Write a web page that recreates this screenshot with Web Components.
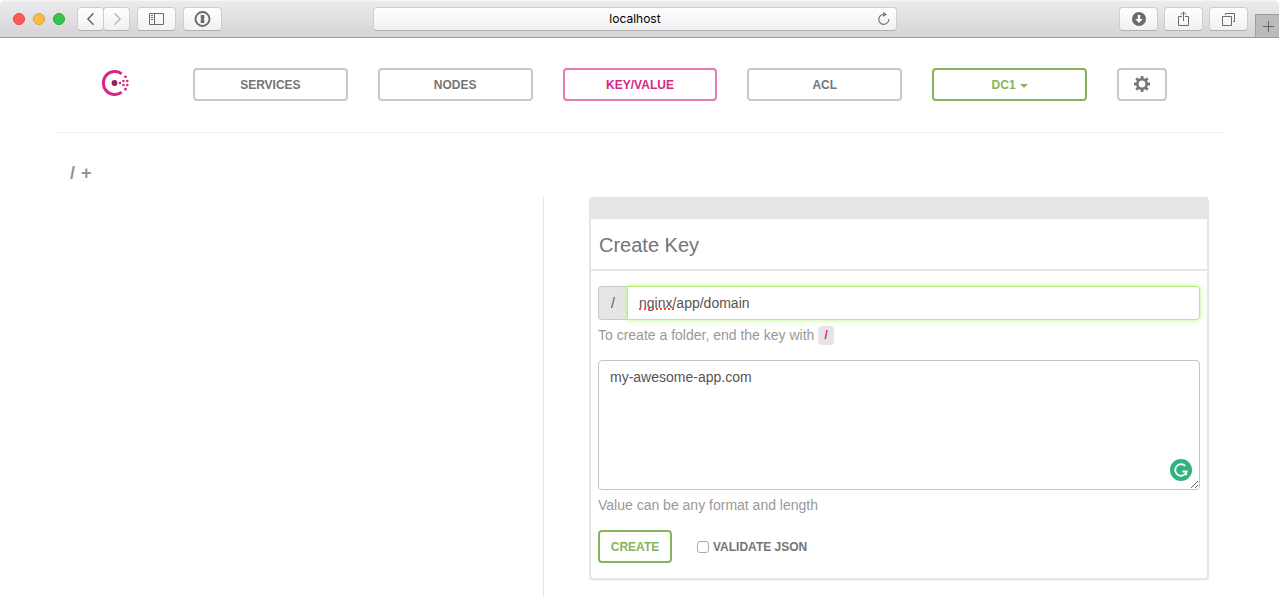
<!DOCTYPE html>
<html lang="en">
<head>
<meta charset="utf-8">
<title>Consul</title>
<style>
  body { margin: 0; background: #fff; color: #757575; font: 14px/20px "Liberation Sans", Arial, sans-serif; }
</style>
</head>
<body>
<consul-app></consul-app>

<template id="tpl-app">
  <style>
    :host { display: flex; flex-direction: column; min-height: 100vh; }
    main { flex: 1; display: flex; flex-direction: column; padding: 0 55px; }
    .cols { flex: 1; display: grid; grid-template-columns: minmax(0, 489fr) minmax(0, 680fr); }
    .list { box-sizing: border-box; border-right: 1px solid #e5e5e5; }
    .detail { padding: 0 15px 16px 45px; }
  </style>
  <browser-toolbar></browser-toolbar>
  <main>
    <consul-nav></consul-nav>
    <key-path></key-path>
    <div class="cols">
      <div class="list"></div>
      <div class="detail">
        <ui-panel>
          <span slot="title">Create Key</span>
          <key-form></key-form>
        </ui-panel>
      </div>
    </div>
  </main>
</template>

<template id="tpl-tool-button">
  <style>
    :host { display: block; width: 39px; }
    :host([small]) { width: 27px; }
    button { box-sizing: border-box; display: flex; align-items: center; justify-content: center; width: 100%; height: 24px; padding: 0; border: 1px solid #cfcdcf; border-bottom-color: #b0aeb0; border-radius: 4px; background: linear-gradient(#fefefe, #f1f1f1); color: #6b6b6b; }
  </style>
  <button type="button"><slot></slot></button>
</template>

<template id="tpl-toolbar">
  <style>
    :host { box-sizing: border-box; position: relative; display: grid; grid-template-columns: 1fr minmax(0, 524px) 1fr; height: 38px; padding: 6px 9px 6px 0; background: linear-gradient(#edebee, #d5d3d5); border-top: 1px solid #f6f4f7; border-bottom: 1px solid #9d9b9d; border-radius: 5px 5px 0 0; column-gap: 16px; }
    .left { display: flex; align-items: center; gap: 7px; padding-left: 13px; }
    .lights { display: flex; gap: 8px; margin-right: 5px; }
    .lights i { box-sizing: border-box; width: 12px; height: 12px; border-radius: 50%; border: 1px solid; }
    .lights i:nth-child(1) { background: #fc5b57; border-color: #e2463f; }
    .lights i:nth-child(2) { background: #fdbc40; border-color: #dfa033; }
    .lights i:nth-child(3) { background: #34c84a; border-color: #27aa35; }
    .pair { display: grid; grid-template-columns: 26px 27px; }
    .left, .right { min-width: 0; }
    .address { box-sizing: border-box; display: flex; align-items: center; height: 24px; padding: 0 5px 0 19px; border: 1px solid #cfcdcf; border-bottom-color: #b0aeb0; border-radius: 4px; background: linear-gradient(#fefefe, #f1f1f1); }
    input { flex: 1; min-width: 0; border: 0; padding: 0; background: none; outline: 0; color: #000; text-align: center; font: 12px/16px Inter, "Liberation Sans", sans-serif; }
    .reload { width: 14px; height: 16px; padding: 0; border: 0; background: none; }
    .reload svg { display: block; }
    .right { display: flex; justify-content: flex-end; gap: 6px; padding-right: 22px; }
    .tab { position: absolute; right: 0; bottom: 0; box-sizing: border-box; width: 24px; height: 23px; padding: 0; border: solid #9d9b9d; border-width: 1px 0 0 1px; background: #bcbabd; }
    .tab svg { display: block; margin: 0 auto; }
  </style>
  <div class="left">
    <div class="lights"><i></i><i></i><i></i></div>
    <div class="pair">
      <tool-button small label="Back"><svg width="12" height="14" viewBox="0 0 12 14" fill="none" stroke="#6b6b6b" stroke-width="1.6"><path d="M8.500 1.200 3 7l5.500 5.800"/></svg></tool-button>
      <tool-button small label="Forward"><svg width="12" height="14" viewBox="0 0 12 14" fill="none" stroke="#bcbcbc" stroke-width="1.6"><path d="M3.500 1.200 9 7l-5.500 5.800"/></svg></tool-button>
    </div>
    <tool-button label="Sidebar"><svg width="15" height="12" viewBox="0 0 15 12" fill="none" stroke="#6b6b6b"><path d="M.5.5h14v11H.5zM5.500.500v11M2 2.500h2M2 4.500h2M2 6.500h2"/></svg></tool-button>
    <tool-button label="Passwords"><svg width="17" height="16" viewBox="0 0 17 16"><circle cx="8.500" cy="8" r="7" fill="none" stroke="#6b6b6b" stroke-width="1.900"/><path d="M6.700 4h3.600v3.200l-.8.8.8.8V12H6.700V8.800l.8-.8-.8-.8z" fill="#6b6b6b"/></svg></tool-button>
  </div>
  <div class="address">
    <input aria-label="Address" value="localhost">
    <button class="reload" type="button" aria-label="Reload"><svg width="14" height="16" viewBox="0 0 14 16"><path d="M11.800 8A5 5 0 1 1 7 3.400" fill="none" stroke="#7c7c7c" stroke-width="1.200"/><path d="M6 .8 10 3.500 6 6z" fill="#7c7c7c"/></svg></button>
  </div>
  <div class="right">
    <tool-button label="Downloads"><svg width="14" height="14" viewBox="0 0 14 14"><circle cx="7" cy="7" r="7" fill="#6b6b6b"/><path d="M5.800 3h2.400v4h2.600L7 11 3.200 7h2.600z" fill="#fff"/></svg></tool-button>
    <tool-button label="Share"><svg width="11" height="16" viewBox="0 0 11 16" fill="none" stroke="#6b6b6b"><path d="M4 5.500H.5v9h10v-9H7M5.500 10V1M2.700 3.800 5.500 1l2.800 2.800"/></svg></tool-button>
    <tool-button label="Tabs"><svg width="13" height="13" viewBox="0 0 13 13" fill="none" stroke="#6b6b6b"><path d="M.5 3.500h9v9h-9zM3.500 2V.5h9v8H11"/></svg></tool-button>
  </div>
  <button class="tab" type="button" aria-label="New tab"><svg width="12" height="12" viewBox="0 0 12 12" stroke="#666"><path d="M6.500 1v11M1 6.500h11"/></svg></button>
</template>

<template id="tpl-nav-item">
  <style>
    :host { display: block; min-width: 0; --edge: #c9c9c9; --ink: #757575; }
    :host([active]) { --edge: #e57bb1; --ink: #d62783; }
    :host([tone="green"]) { --edge: #84b45b; --ink: #84b45b; }
    a, button { box-sizing: border-box; display: flex; align-items: center; justify-content: center; gap: 4px; width: 100%; height: 33px; padding: 0; border: 2px solid var(--edge); border-radius: 4px; background: #fff; color: var(--ink); font: bold 12px/20px "Liberation Sans", Arial, sans-serif; text-decoration: none; }
  </style>
</template>

<template id="tpl-nav">
  <style>
    :host { display: grid; grid-template-columns: 62px repeat(5, minmax(0, 1fr)) 50px; column-gap: 30px; padding: 30px 57px 31px 46px; border-bottom: 1px solid #eee; }
    .logo { display: block; width: 28px; height: 29px; }
    .logo svg, nav-item svg { display: block; }
    .caret { border: solid transparent; border-width: 4px 4px 0; border-top-color: #84b45b; margin-top: 2px; }
  </style>
  <a class="logo" href="#" aria-label="Consul"><svg width="28" height="29" viewBox="0 0 28 29"><path d="M20.600 5.700A11.500 11.500 0 1 0 20.600 24.300" fill="none" stroke="#d62783" stroke-width="3"/><circle cx="13.500" cy="15" r="2.900" fill="#961d59"/><g fill="#d62783"><circle cx="19" cy="15" r="1.300"/><circle cx="22.400" cy="13" r="1.300"/><circle cx="22.400" cy="17" r="1.300"/><circle cx="26.300" cy="13" r="1.300"/><circle cx="26.300" cy="17" r="1.300"/><circle cx="24.500" cy="8.800" r="1.400"/><circle cx="24.500" cy="21.200" r="1.400"/></g></svg></a>
  <nav-item href="#services">SERVICES</nav-item>
  <nav-item href="#nodes">NODES</nav-item>
  <nav-item href="#kv" active>KEY/VALUE</nav-item>
  <nav-item href="#acl">ACL</nav-item>
  <nav-item tone="green">DC1<i class="caret"></i></nav-item>
  <nav-item label="Settings"><svg width="16" height="18" viewBox="0 0 16 18" fill="none" stroke="#757575"><circle cx="8" cy="8" r="4.700" stroke-width="2.600"/><path d="M8 0v3M8 13v3M0 8h3M13 8h3M2.300 2.300 4.500 4.500M11.500 11.500l2.200 2.200M2.300 13.700l2.200-2.200M11.500 4.500l2.200-2.200" stroke-width="2.800"/></svg></nav-item>
</template>

<template id="tpl-path">
  <style>
    :host { display: flex; gap: 6px; padding: 30px 15px 14px; font-size: 18px; line-height: 20px; font-weight: bold; }
    a { color: #939393; text-decoration: none; }
  </style>
  <a href="#root">/</a><a href="#new">+</a>
</template>

<template id="tpl-panel">
  <style>
    :host { display: block; border: 2px solid #e5e5e5; border-radius: 4px; box-shadow: 0 1px 1px #f2f2f2; }
    .bar { height: 20px; background: #e5e5e5; }
    h4 { margin: 0; padding: 16px 8px 14px; border-bottom: 2px solid #e5e5e5; font-size: 20px; line-height: 20px; font-weight: 500; color: #757575; }
    .body { padding: 15px 7px; }
  </style>
  <div class="bar"></div>
  <h4><slot name="title"></slot></h4>
  <div class="body"><slot></slot></div>
</template>

<template id="tpl-form">
  <style>
    :host { display: block; }
    form { margin: 0; }
    .group { display: flex; height: 34px; }
    .addon { box-sizing: border-box; width: 29px; border: 1px solid #c8c8c8; border-right: 0; border-radius: 4px 0 0 4px; background: #e5e5e5; color: #555; text-align: center; line-height: 32px; }
    .field { position: relative; flex: 1; display: flex; min-width: 0; }
    .field input { box-sizing: border-box; width: 100%; margin: 0; padding: 0 11px; border: 1px solid #b5ec7d; border-radius: 0 4px 4px 0; outline: 0; background: #fff; box-shadow: 0 0 5px #b9f57c; color: #555; font: inherit; }
    .spell { position: absolute; left: 12px; top: 22px; width: 35px; height: 0; border-top: 2px dotted #ff4136; pointer-events: none; }
    .help { margin: 5px 0 15px; padding: 0; color: #999; line-height: 20px; }
    code { display: inline-block; box-sizing: border-box; width: 16px; height: 20px; border-top: 1px solid #fff; border-radius: 4px; background: #e5e5e5 padding-box; color: #d62783; text-align: center; font: bold 12px/19px "Liberation Sans", Arial, sans-serif; vertical-align: top; }
    .value { position: relative; }
    textarea { display: block; box-sizing: border-box; width: 100%; height: 130px; margin: 0; padding: 6px 11px; border: 1px solid #c4c4c4; border-radius: 4px; outline: 0; background: #fff; color: #555; font: inherit; resize: vertical; }
    .badge { position: absolute; right: 8px; bottom: 9px; display: block; }
    .actions { display: flex; align-items: center; gap: 25px; height: 33px; }
    button { box-sizing: border-box; width: 74px; height: 33px; padding: 0; border: 2px solid #84b45b; border-radius: 4px; background: #fff; color: #84b45b; font: bold 12px/20px "Liberation Sans", Arial, sans-serif; }
    label { display: flex; align-items: center; gap: 4px; font-size: 12px; font-weight: bold; color: #757575; }
    label input { appearance: none; box-sizing: border-box; width: 12px; height: 12px; margin: 0; border: 1px solid #aaa; border-radius: 3px; background: #fff; }
  </style>
  <form>
    <div class="group">
      <span class="addon">/</span>
      <div class="field"><input aria-label="Key" value="nginx/app/domain" spellcheck="false"><span class="spell"></span></div>
    </div>
    <p class="help">To create a folder, end the key with <code>/</code></p>
    <div class="value">
      <textarea aria-label="Value" spellcheck="false">my-awesome-app.com</textarea>
      <svg class="badge" width="22" height="22" viewBox="0 0 22 22"><circle cx="11" cy="11" r="11" fill="#2fb37c"/><path d="M15.300 7A5.800 5.800 0 1 0 16.600 12.500H12.500M16.200 12v4.200" fill="none" stroke="#fff" stroke-width="1.800"/></svg>
    </div>
    <p class="help">Value can be any format and length</p>
    <div class="actions">
      <button type="button">CREATE</button>
      <label for="json"><input type="checkbox" id="json">VALIDATE JSON</label>
    </div>
  </form>
</template>

<script>
  class TemplateElement extends HTMLElement {
    constructor() {
      super();
      this.attachShadow({ mode: 'open' });
      this.shadowRoot.append(document.getElementById(this.constructor.tpl).content.cloneNode(true));
    }
  }

  const define = (name, tpl) =>
    customElements.define(name, class extends TemplateElement { static tpl = tpl; });

  customElements.define('tool-button', class extends TemplateElement {
    static tpl = 'tpl-tool-button';
    connectedCallback() {
      this.shadowRoot.querySelector('button').setAttribute('aria-label', this.getAttribute('label'));
    }
  });

  // Renders a link when it has an href, otherwise a button.
  customElements.define('nav-item', class extends TemplateElement {
    static tpl = 'tpl-nav-item';
    connectedCallback() {
      if (this.control) return;
      const href = this.getAttribute('href');
      this.control = document.createElement(href ? 'a' : 'button');
      if (href) this.control.href = href; else this.control.type = 'button';
      if (this.hasAttribute('label')) this.control.setAttribute('aria-label', this.getAttribute('label'));
      this.control.append(document.createElement('slot'));
      this.shadowRoot.append(this.control);
    }
  });

  define('browser-toolbar', 'tpl-toolbar');
  define('consul-nav', 'tpl-nav');
  define('key-path', 'tpl-path');
  define('ui-panel', 'tpl-panel');
  define('key-form', 'tpl-form');
  define('consul-app', 'tpl-app');
</script>
</body>
</html>
